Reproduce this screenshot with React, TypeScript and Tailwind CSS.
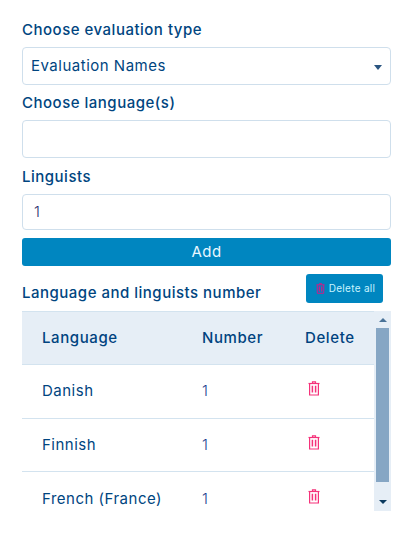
const font = { fontFamily: 'Inter, "Noto Sans", sans-serif' }

function TrashIcon({ className }: { className: string }) {
  return (
    <svg viewBox="0 0 12 15" className={className} fill="none" stroke="currentColor">
      <path d="M0.5 2.5H11.5" strokeWidth="1.2" />
      <path d="M4.5 2V0.9H7.5V2" strokeWidth="1.2" />
      <path d="M1.6 2.5V14H10.4V2.5" strokeWidth="1.2" />
      <path d="M4.4 4.8V11.6M7.6 4.8V11.6" strokeWidth="1.5" />
    </svg>
  )
}

const rows = ['Danish', 'Finnish', 'French (France)']

export default function App() {
  return (
    <div className="h-[539px] w-[414px] overflow-hidden bg-white pl-[22px] pr-[23px] pt-[20px] text-[15px] tracking-[0.5px] text-[#00457f]" style={font}>
      <label className="block h-[27px] font-medium leading-[20px]">Choose evaluation type</label>
      <div className="flex h-[38px] items-center justify-between rounded-[4px] border border-[#cfdfec] pl-[8px] pr-[8px]">
        <span>Evaluation Names</span>
        <span className="mt-[2px] h-0 w-0 border-x-[4px] border-t-[5px] border-x-transparent border-t-[#2a5580]" />
      </div>
      <label className="mt-[8px] block h-[27px] font-medium leading-[20px]">Choose language(s)</label>
      <div className="h-[38px] rounded-[4px] border border-[#cfdfec]" />
      <label className="mt-[9px] block h-[27px] font-medium leading-[20px]">Linguists</label>
      <div className="flex h-[36px] items-center rounded-[4px] border border-[#cfdfec] pl-[11px] font-light text-[#2f2f6f]">1</div>
      <button className="mt-[8px] block h-[28px] w-full rounded-[3px] bg-[#0086c0] text-[#e8f7ff]">Add</button>
      <div className="mt-[8px] flex h-[29px] items-end justify-between">
        <h2 className="font-medium leading-[20px]">Language and linguists number</h2>
        <button className="mr-[8px] flex h-[29px] w-[77px] items-center justify-center gap-[4px] rounded-[3px] bg-[#0086c0] pl-[2px] text-[10px] tracking-[0.3px] text-[#c8f4ff]">
          <TrashIcon className="h-[11px] w-[9px] text-[#e8107f]" />
          Delete all
        </button>
      </div>
      <div className="mt-[8px] flex h-[200px]">
        <div className="min-w-0 flex-1">
          <div className="flex h-[54px] items-center border-y border-[#d3e3ef] bg-[#e6eef6] font-medium tracking-[0.6px] text-[#00437f]">
            <span className="w-[180px] pl-[20px]">Language</span>
            <span className="w-[103px]">Number</span>
            <span>Delete</span>
          </div>
          {rows.map((name, i) => (
            <div key={name} className={`flex h-[53.5px] items-center ${i < 2 ? 'border-b border-[#d3e3ef]' : ''}`}>
              <span className="w-[180px] pl-[20px]">{name}</span>
              <span className="w-[103px] font-light text-[#1f3f90]">1</span>
              <TrashIcon className="mb-[5px] ml-[3px] h-[15px] w-[12px] text-[#f5327a]" />
            </div>
          ))}
        </div>
        <div className="flex w-[17px] flex-col items-center bg-[#e6eef6]">
          <div className="flex h-[17px] items-center justify-center">
            <span className="h-0 w-0 border-x-[4px] border-b-[4px] border-x-transparent border-b-[#4a7398]" />
          </div>
          <div className="h-[154px] w-[13px] shrink-0 bg-[#86a6c4]" />
          <div className="flex flex-1 items-center justify-center pt-[10px]">
            <span className="h-0 w-0 border-x-[4px] border-t-[4px] border-x-transparent border-t-[#0b3a5e]" />
          </div>
        </div>
      </div>
    </div>
  )
}
